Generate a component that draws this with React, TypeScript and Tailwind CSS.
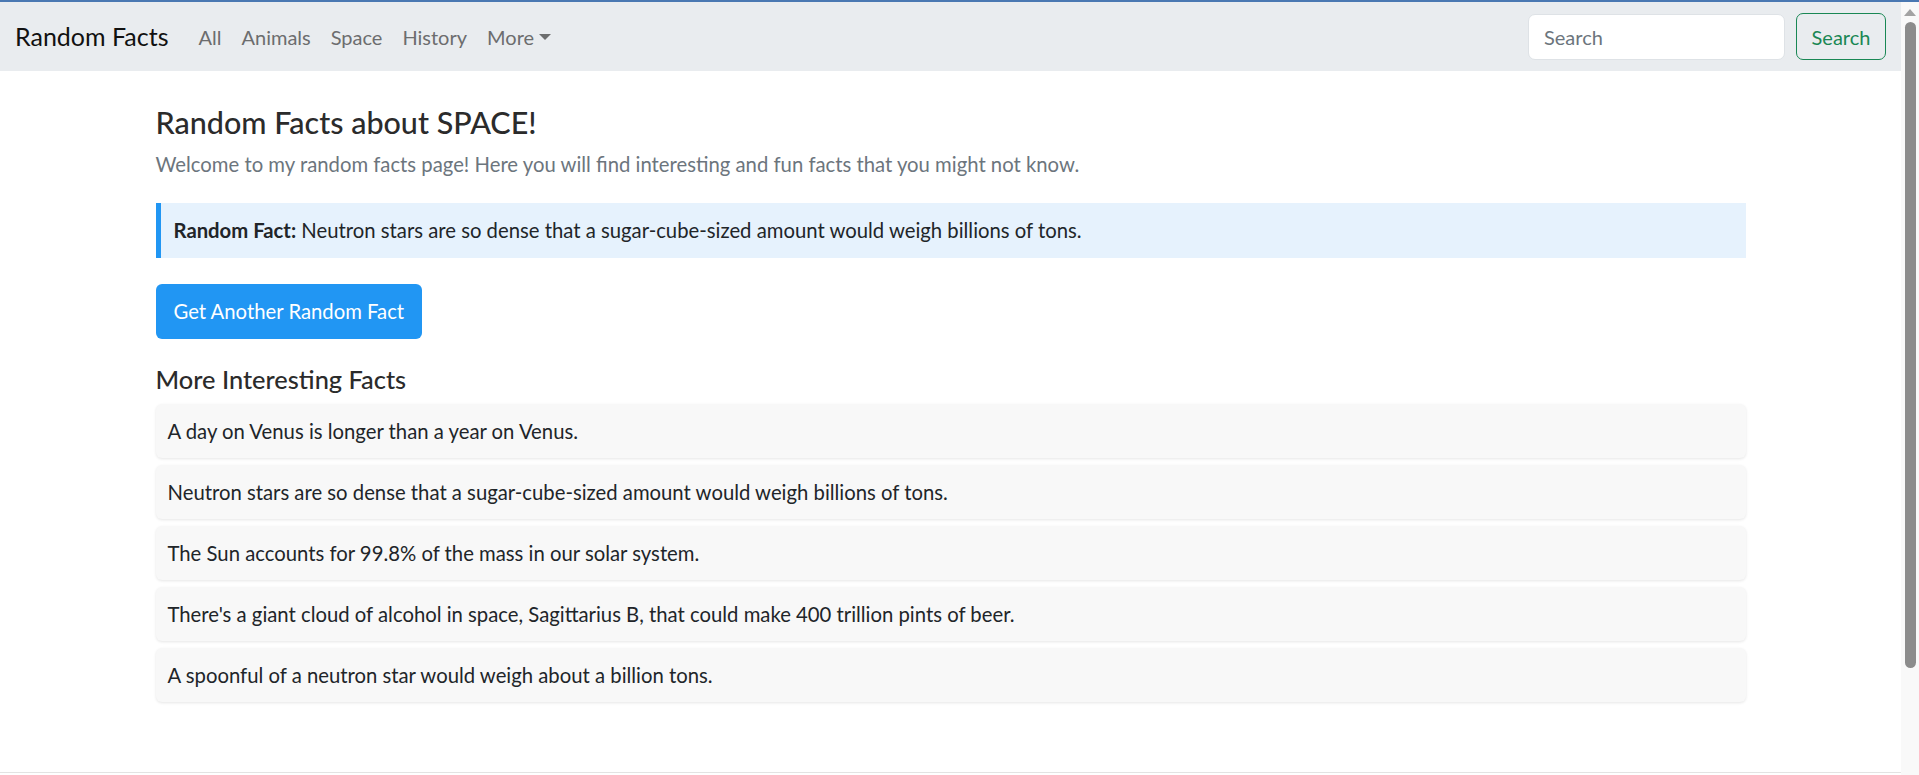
import React from "react";

const facts = [
  "A day on Venus is longer than a year on Venus.",
  "Neutron stars are so dense that a sugar-cube-sized amount would weigh billions of tons.",
  "The Sun accounts for 99.8% of the mass in our solar system.",
  "There's a giant cloud of alcohol in space, Sagittarius B, that could make 400 trillion pints of beer.",
  "A spoonful of a neutron star would weigh about a billion tons.",
];

export default function App() {
  return (
    <div
      className="h-[775px] w-full overflow-hidden bg-white flex flex-col"
      style={{ fontFamily: "Lato, 'Open Sans', 'Noto Sans', sans-serif" }}
    >
      <div className="h-[2px] w-full bg-[#4a78b2] shrink-0" />
      <div className="flex flex-1 min-h-0">
        <div className="flex-1 flex flex-col min-w-0">
          {/* Navbar */}
          <nav className="h-[69px] shrink-0 bg-[#e9ecef] flex items-center pl-[15px] pr-[15px]">
            <span className="text-[25px] leading-none text-[#111] mr-[20px]">Random Facts</span>
            <div className="flex items-center text-[20px] text-[#6c6d6e]">
              <span className="px-[10px]">All</span>
              <span className="px-[10px]">Animals</span>
              <span className="px-[10px]">Space</span>
              <span className="px-[10px]">History</span>
              <span className="px-[10px] flex items-center">
                More
                <span className="ml-[5px] inline-block w-0 h-0 border-l-[6px] border-r-[6px] border-t-[6px] border-l-transparent border-r-transparent border-t-[#6c6d6e]" />
              </span>
            </div>
            <div className="ml-auto flex items-center gap-[11px]">
              <input
                className="h-[46px] w-[257px] rounded-[7px] border border-[#dee2e6] bg-white px-[15px] text-[20px] text-[#212529] placeholder:text-[#6c757d] outline-none"
                placeholder="Search"
              />
              <button className="h-[47px] w-[90px] rounded-[7px] border border-[#198754] text-[#198754] text-[20px] bg-transparent">
                Search
              </button>
            </div>
          </nav>

          {/* Main */}
          <main className="flex-1 min-h-0">
            <div className="mx-auto w-[1590px] pt-[33px]">
              <h1 className="text-[30.5px] leading-[36px] font-medium text-[#2b2b2b]">
                Random Facts about SPACE!
              </h1>
              <p className="mt-[9px] text-[20.3px] leading-[30px] text-[#6c757d]">
                Welcome to my random facts page! Here you will find interesting and fun facts that you might not know.
              </p>
              <div className="mt-[24px] h-[55px] flex items-center bg-[#e6f2fd] border-l-[5px] border-[#2196f3] pl-[13px] text-[20.3px] text-[#212529]">
                <span>
                  <strong className="font-bold">Random Fact:</strong> Neutron stars are so dense that a sugar-cube-sized amount would weigh billions of tons.
                </span>
              </div>
              <button className="mt-[26px] h-[55px] px-[18px] rounded-[6px] bg-[#2196f3] text-white text-[20.3px]">
                Get Another Random Fact
              </button>
              <h2 className="mt-[25px] text-[25.4px] leading-[30px] font-medium text-[#2b2b2b]">
                More Interesting Facts
              </h2>
              <ul className="mt-[10px] flex flex-col gap-[7px]">
                {facts.map((f) => (
                  <li
                    key={f}
                    className="h-[54px] flex items-center px-[12px] rounded-[6px] bg-[#f8f8f8] shadow-[0_1px_3px_rgba(0,0,0,0.1)] text-[20.3px] text-[#212529]"
                  >
                    {f}
                  </li>
                ))}
              </ul>
            </div>
          </main>
          <footer className="h-[3px] shrink-0 border-t border-[#e3e3e3]" />
        </div>

        {/* Fake scrollbar */}
        <div className="w-[18px] shrink-0 bg-[#f9f9f9] flex flex-col items-center pt-[7px]">
          <span className="w-0 h-0 border-l-[6px] border-r-[6px] border-b-[7px] border-l-transparent border-r-transparent border-b-[#a3a3a3]" />
          <div className="mt-[6px] w-[11px] h-[646px] rounded-full bg-[#8c8c8c]" />
        </div>
      </div>
    </div>
  );
}
